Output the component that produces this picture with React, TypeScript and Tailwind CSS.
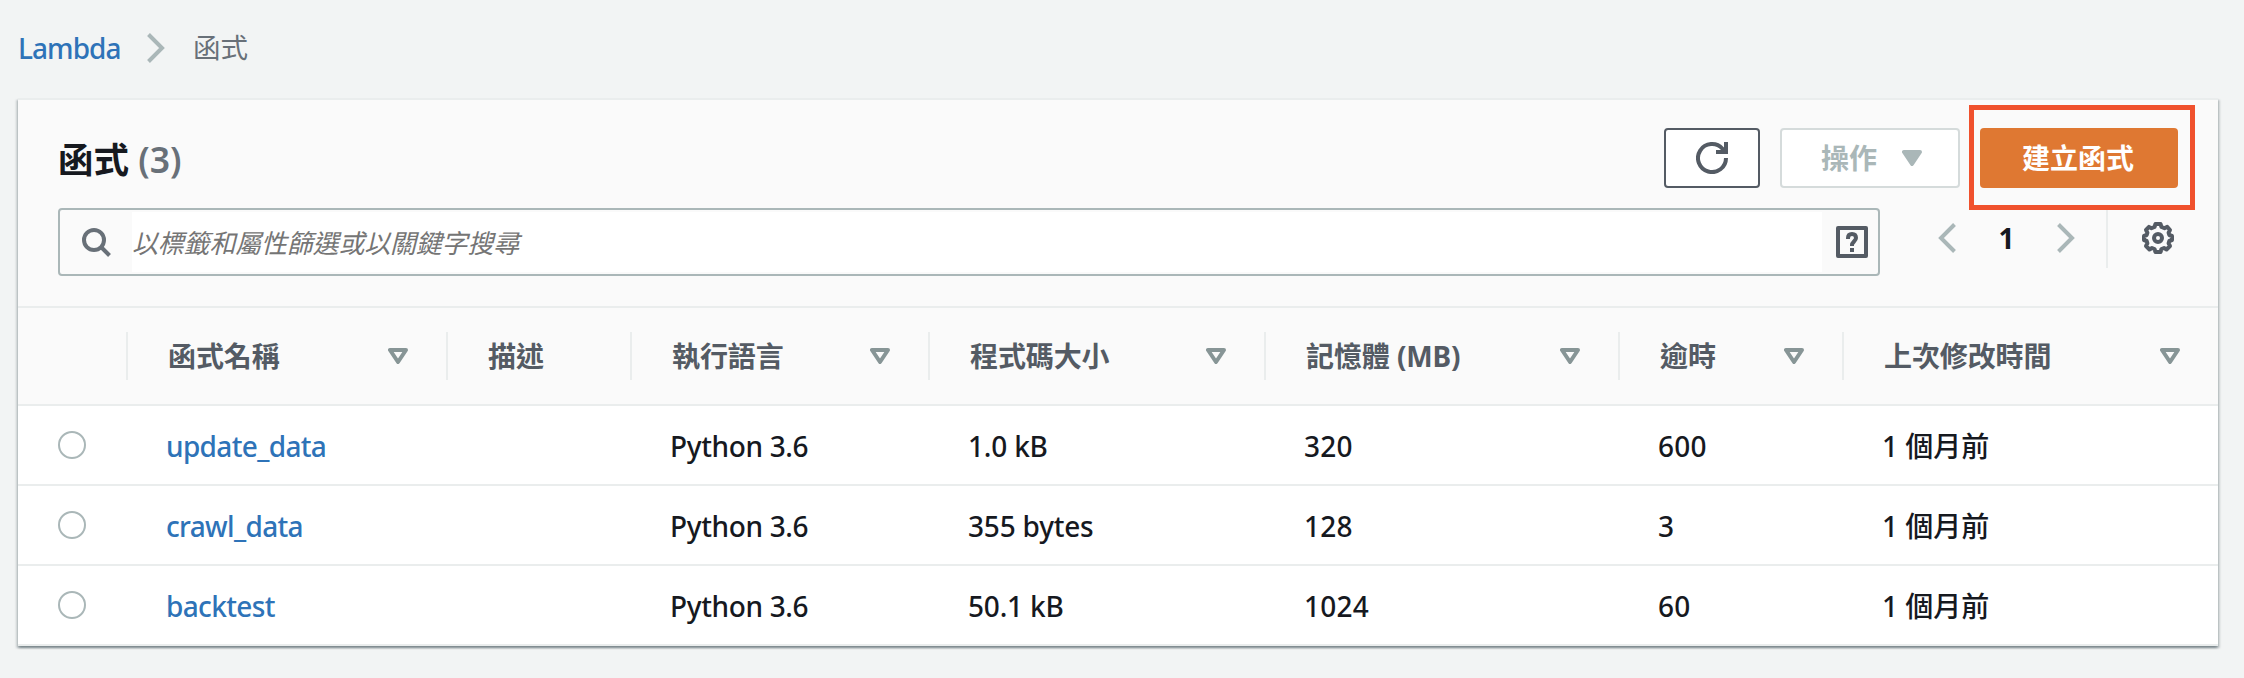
type Column = { label: string; width: string; tracking: string; sortable: boolean };

const columns: Column[] = [
  { label: "函式名稱", width: "w-[320px]", tracking: "tracking-[-0.65px]", sortable: true },
  { label: "描述", width: "w-[184px]", tracking: "", sortable: false },
  { label: "執行語言", width: "w-[298px]", tracking: "tracking-[-0.35px]", sortable: true },
  { label: "程式碼大小", width: "w-[336px]", tracking: "tracking-[-0.2px]", sortable: true },
  { label: "記憶體 (MB)", width: "w-[354px]", tracking: "tracking-[0.2px]", sortable: true },
  { label: "逾時", width: "w-[224px]", tracking: "tracking-[0.2px]", sortable: true },
  { label: "上次修改時間", width: "flex-1", tracking: "", sortable: true },
];

const rows = [
  ["update_data", "", "Python 3.6", "1.0 kB", "320", "600", "1 個月前"],
  ["crawl_data", "", "Python 3.6", "355 bytes", "128", "3", "1 個月前"],
  ["backtest", "", "Python 3.6", "50.1 kB", "1024", "60", "1 個月前"],
];

function Chevron({ flip = false }: { flip?: boolean }) {
  return (
    <svg width="20" height="32" viewBox="0 0 20 32" fill="none" stroke="#aab7b8" strokeWidth="4" className={flip ? "-scale-x-100" : ""}>
      <path d="M2.500 2.500 16 16 2.500 29.500" />
    </svg>
  );
}

function SortIcon() {
  return (
    <svg width="20" height="16" viewBox="0 0 20 16" fill="none" stroke="#879596" strokeWidth="4" strokeLinejoin="round">
      <path d="M2 2H18L10 14Z" />
    </svg>
  );
}

function SearchIcon() {
  return (
    <svg width="32" height="32" viewBox="0 0 32 32" fill="none" stroke="#687078" strokeWidth="4">
      <circle cx="14" cy="14" r="10" />
      <path d="M21 21 29.500 29.500" />
    </svg>
  );
}

function HelpIcon() {
  return (
    <svg width="32" height="32" viewBox="0 0 32 32" fill="none" stroke="#545b64" strokeWidth="4" strokeLinejoin="round">
      <path d="M2 2H30V30H2Z" />
      <path d="M12 13V12Q12 8 16 8T20 12Q20 13.500 18 15.500T16 19V20" strokeLinejoin="miter" />
      <path d="M16 22V26" />
    </svg>
  );
}

function RefreshIcon() {
  return (
    <svg width="32" height="32" viewBox="0 0 32 32" fill="none" stroke="#545b64" strokeWidth="4">
      <path d="M30 16A14 14 0 1 1 26.500 6.800L29 10" />
      <path d="M30 0V10H20" />
    </svg>
  );
}

function GearIcon() {
  return (
    <svg width="32" height="32" viewBox="0 0 32 32" fill="none" stroke="#545b64" strokeWidth="4" strokeLinejoin="round">
      <path d="M13.500 2H18.500L19.500 5L22.500 6.200L25.200 4.900L28 8L26.600 10.600L27.300 13L30 14V18L27.300 19L26.600 21.400L28 24L24.500 27.500L22 26L19.500 27L18.500 30H13.500L12.500 27L10 26L7.500 27.500L4 24L5.400 21.400L4.700 19L2 18V14L4.700 13L5.400 10.600L4 8L7 4.900L9.500 6.200L12.500 5Z" />
      <circle cx="16" cy="16" r="4" />
    </svg>
  );
}

export default function App() {
  return (
    <div className='h-[678px] w-[2244px] bg-[#f2f4f4] font-["Noto_Sans","Noto_Sans_CJK_TC",sans-serif] text-[28px] leading-10 text-[#16191f]'>
      <nav className="flex h-[98px] items-start pl-4 pt-7">
        <span className="w-[130px] pl-0.5 font-medium tracking-[-0.95px] text-[#2e73b8]">Lambda</span>
        <span className="flex h-10 w-[47px] items-center">
          <Chevron />
        </span>
        <span className="text-[27.500px] text-[#687078]">函式</span>
      </nav>

      <main className="ml-[18px] flex h-[548px] w-[2200px] flex-col border-t-2 border-[#eaeded] bg-white shadow-[0_2px_2px_0_rgba(0,28,36,0.3),2px_2px_2px_0_rgba(0,28,36,0.15),-2px_2px_2px_0_rgba(0,28,36,0.15)]">
        <header className="h-[208px] shrink-0 border-b-2 border-[#eaeded] bg-[#fafafa] px-10 pt-7">
          <div className="flex h-[60px] items-center">
            <h1 className="flex-1 pt-0.5 text-[35.5px] font-bold">
              函式 <span className="font-semibold text-[#687078]">(3)</span>
            </h1>
            <div className="flex gap-5">
              <button className="flex h-[60px] w-24 items-center justify-center rounded-[4px] border-2 border-[#545b64] bg-white">
                <RefreshIcon />
              </button>
              <button className="flex h-[60px] w-[180px] items-center justify-end gap-[25px] rounded-[4px] border-2 border-[#d5dbdb] bg-white pr-9 font-bold text-[#aab7b8]">
                操作
                <svg width="20" height="16" viewBox="0 0 20 16" fill="#aab7b8" stroke="#aab7b8" strokeWidth="4" strokeLinejoin="round">
                  <path d="M2 2H18L10 14Z" />
                </svg>
              </button>
              <div className="relative">
                <button className="h-[60px] w-[198px] rounded-[4px] bg-[#df7832] pr-0.5 font-bold text-white">建立函式</button>
                <div className="pointer-events-none absolute -left-[11px] -top-[23px] h-[105px] w-[226px] border-[5px] border-[#f0512d]" />
              </div>
            </div>
          </div>
          <div className="flex pt-5">
            <div className="flex h-[68px] w-[1822px] items-center rounded-[4px] border-2 border-[#aab7b8] p-0.5">
              <span className="flex w-[70px] justify-center pr-0.5">
                <SearchIcon />
              </span>
              <span className="flex h-[60px] flex-1 items-center bg-white pt-px text-[26px] italic tracking-[-0.2px] text-[#757575]">以標籤和屬性篩選或以關鍵字搜尋</span>
              <span className="flex w-[54px] justify-end pr-2">
                <HelpIcon />
              </span>
            </div>
            <div className="flex h-[60px] flex-1 items-center pl-[57px]">
              <Chevron flip />
              <span className="w-[99px] text-center text-[28px] font-bold">1</span>
              <Chevron />
              <span className="ml-[30px] mr-[34px] h-[60px] w-0.5 bg-[#eaeded]" />
              <GearIcon />
            </div>
          </div>
        </header>

        <div className="flex h-[98px] shrink-0 items-center border-b-2 border-[#eaeded] bg-[#fafafa] pl-[108px] font-bold text-[#545b64]">
          {columns.map((c) => (
            <div key={c.label} className={`flex h-12 items-center border-l-2 border-[#eaeded] pl-10 pr-[38px] ${c.width}`}>
              <span className="flex-1 tracking-[-0.1px]">{c.label}</span>
              {c.sortable && <SortIcon />}
            </div>
          ))}
        </div>

        {rows.map((r) => (
          <div key={r[0]} className="flex h-20 shrink-0 items-center border-b-2 border-[#eaeded] pl-10">
            <span className="mr-10 h-7 w-7 rounded-full border-2 border-[#aab7b8]" />
            {r.map((v, i) => (
              <span key={i} className={`pl-10 pt-0.5 font-medium ${columns[i].width} ${columns[i].tracking} ${i === 0 ? "text-[#2e73b8]" : ""}`}>
                {v}
              </span>
            ))}
          </div>
        ))}
      </main>
    </div>
  );
}
